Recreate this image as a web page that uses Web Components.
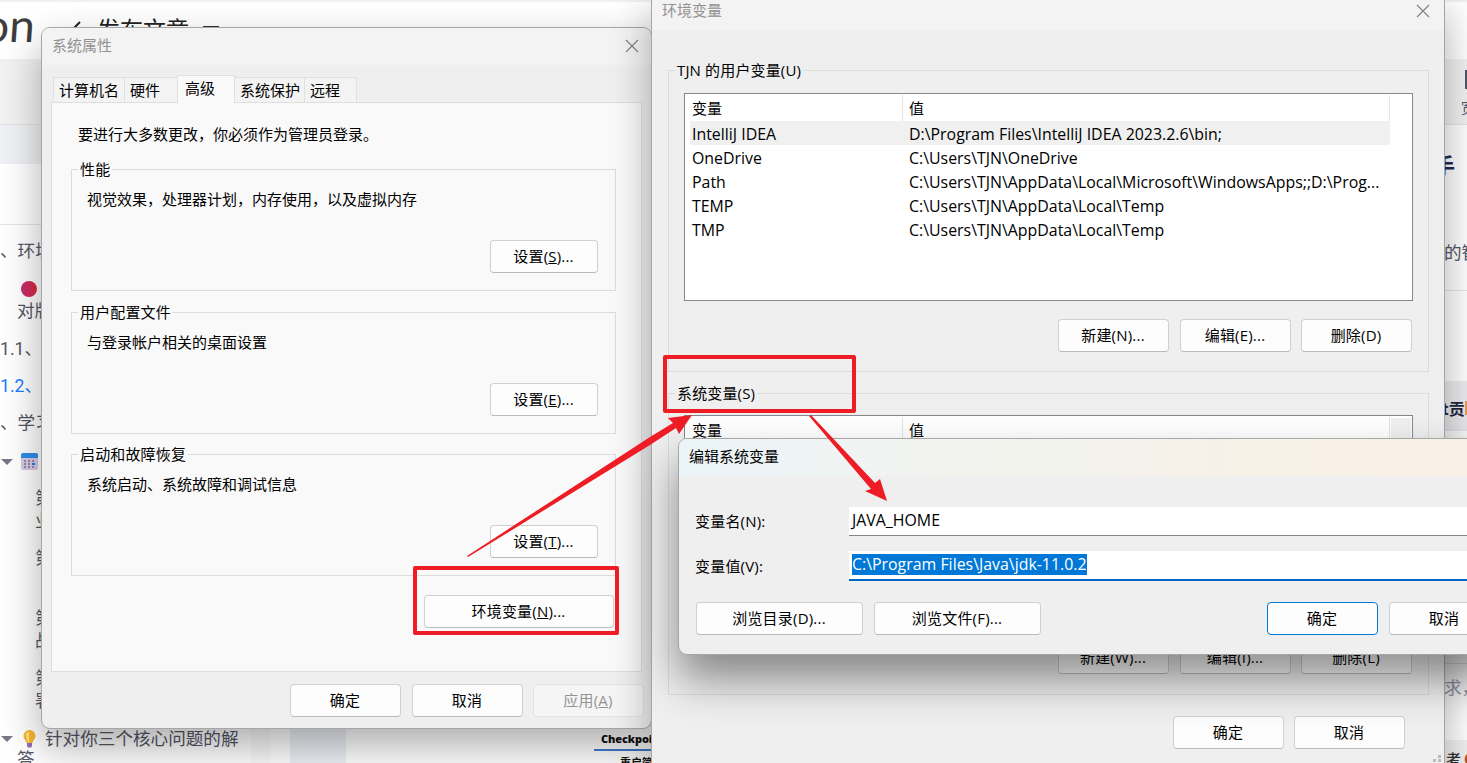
<!DOCTYPE html>
<html lang="zh-CN">
<head>
<meta charset="utf-8">
<title>环境变量</title>
<style>
    html, body {
        margin: 0;
        height: 100%;
        overflow: hidden;
        background: #fff;
    }

    body {
        font: 15px/20px "Open Sans", "Noto Sans CJK SC", sans-serif;
        color: #000;
    }
</style>
</head>
<body>
<desk-top>
    <article-page></article-page>

    <dialog-window class="props" heading="系统属性" inactive closable>
        <tab-strip>
            <tab-item style="width:70px">计算机名</tab-item>
            <tab-item style="width:52px">硬件</tab-item>
            <tab-item style="width:56px" selected>高级</tab-item>
            <tab-item style="width:69px">系统保护</tab-item>
            <tab-item style="width:51px">远程</tab-item>
        </tab-strip>
        <tab-panel>
            <span slot="intro">要进行大多数更改，你必须作为管理员登录。</span>
            <group-box heading="性能">
                <setting-block>视觉效果，处理器计划，内存使用，以及虚拟内存<push-button slot="action" style="width:108px">设置(<u>S</u>)...</push-button></setting-block>
            </group-box>
            <group-box heading="用户配置文件">
                <setting-block>与登录帐户相关的桌面设置<push-button slot="action" style="width:108px">设置(<u>E</u>)...</push-button></setting-block>
            </group-box>
            <group-box heading="启动和故障恢复" style="margin-top:-1px">
                <setting-block>系统启动、系统故障和调试信息<push-button slot="action" style="width:108px">设置(<u>T</u>)...</push-button></setting-block>
            </group-box>
            <push-button slot="extra" style="width:190px">环境变量(<u>N</u>)...</push-button>
        </tab-panel>
        <button-row style="padding:12px 7px 0 0">
            <push-button>确定</push-button>
            <push-button>取消</push-button>
            <push-button disabled style="margin-left:-1px">应用(<u>A</u>)</push-button>
        </button-row>
    </dialog-window>

    <dialog-window class="env" heading="环境变量" inactive closable>
        <group-box heading="TJN 的用户变量(U)" style="height:311px;margin:31px 15px 12px 16px">
            <var-table style="margin:13px 15px 0">
                <var-row name="IntelliJ IDEA" value="D:\Program Files\IntelliJ IDEA 2023.2.6\bin;" selected></var-row>
                <var-row name="OneDrive" value="C:\Users\TJN\OneDrive"></var-row>
                <var-row name="Path" value="C:\Users\TJN\AppData\Local\Microsoft\WindowsApps;;D:\Prog..."></var-row>
                <var-row name="TEMP" value="C:\Users\TJN\AppData\Local\Temp"></var-row>
                <var-row name="TMP" value="C:\Users\TJN\AppData\Local\Temp"></var-row>
            </var-table>
            <button-row style="padding:18px 16px 0 0">
                <push-button>新建(N)...</push-button>
                <push-button>编辑(E)...</push-button>
                <push-button style="margin-left:-1px">删除(D)</push-button>
            </button-row>
        </group-box>
        <group-box heading="系统变量(S)" style="height:311px;margin:0 15px 0 16px">
            <var-table scroll style="margin:12px 15px 0"></var-table>
            <button-row style="padding:18px 16px 0 0">
                <push-button>新建(W)...</push-button>
                <push-button>编辑(I)...</push-button>
                <push-button style="margin-left:-1px">删除(L)</push-button>
            </button-row>
        </group-box>
        <button-row style="padding:21px 39px 0 0">
            <push-button>确定</push-button>
            <push-button style="margin-left:-1px">取消</push-button>
        </button-row>
        <size-grip></size-grip>
    </dialog-window>

    <dialog-window class="edit" heading="编辑系统变量">
        <edit-field label="变量名(N):" style="margin-top:31px">JAVA_HOME</edit-field>
        <edit-field label="变量值(V):" style="margin-top:15px" focused>C:\Program Files\Java\jdk-11.0.2</edit-field>
        <button-row style="padding:21px 16px 0 17px">
            <push-button style="width:167px">浏览目录(D)...</push-button>
            <push-button style="width:167px;margin-right:auto">浏览文件(F)...</push-button>
            <push-button primary>确定</push-button>
            <push-button>取消</push-button>
        </button-row>
    </dialog-window>

    <red-marks></red-marks>
</desk-top>

<script>
// Each element only needs its own markup, the base class does the cloning
class BaseElement extends HTMLElement {
    connectedCallback() {
        if (this.shadowRoot) return;
        const template = document.createElement("template");
        template.innerHTML = this.render();
        this.attachShadow({ mode: "open" }).appendChild(template.content.cloneNode(true));
    }
    attr(name) {
        return this.getAttribute(name) || "";
    }
}

class DeskTop extends BaseElement {
    render() {
        return `
            <style>
            :host {
                display: block;
                position: relative;
                width: 1467px;
                height: 763px;
                overflow: hidden;
            }
            ::slotted(dialog-window) { position: absolute; }
            ::slotted(.props) { left: 41px; top: 27px; width: 609px; height: 700px; }
            ::slotted(.env) { left: 651px; top: -8px; width: 792px; height: 800px; }
            ::slotted(.edit) { left: 678px; top: 438px; width: 837px; height: 215px; }
            ::slotted(red-marks) { position: absolute; left: 0; top: 0; }
            </style>
            <slot></slot>`;
    }
}

class ArticlePage extends BaseElement {
    render() {
        return `
            <style>
            :host {
                display: grid;
                grid-template-rows: 59px 66px 39px 599px;
                height: 763px;
                color: #555666;
                font: 17.6px/22px Roboto, "Noto Sans CJK SC", sans-serif;
                font-weight: 400;
                white-space: nowrap;
            }
            header {
                display: flex;
                box-sizing: border-box;
                border-top: 2px solid #f0f0f0;
                color: #222;
            }
            .logo {
                width: 74px;
                margin-left: -17px;
                font: 46px/46px Lato, sans-serif;
                color: #3d3d3d;
                transform: skewX(-4deg);
            }
            .back { margin: 19px 16px 0 14px; }
            .title { font-size: 23px; line-height: 58px; font-weight: 400; }
            .dash { width: 16px; height: 2px; margin: 24px 0 0 14px; background: #333; }
            .tools {
                display: flex;
                justify-content: flex-end;
                background: #f2f2f3;
                border-bottom: 1px solid #e2e3e5;
                box-sizing: border-box;
                overflow: hidden;
            }
            .tool { width: 6px; font-size: 14px; line-height: 20px; }
            .tool i { display: block; width: 2px; height: 19px; margin: 11px 0 9px 4px; background: #555666; }
            .crumbs { background: linear-gradient(90deg, #eff1f4 0 1440px, #fff 1440px); }
            main { display: flex; }
            nav { width: 270px; border-top: 1px solid #e6e6e6; margin-top: 60px; background: linear-gradient(90deg, #fff 0 251px, #fafafa 251px); }
            nav div { display: flex; align-items: center; height: 22px; }
            nav svg { flex: none; }
            .blue { color: #1a7cff; }
            .body { width: 1174px; display: flex; align-items: flex-end; }
            .block { width: 56px; height: 60px; margin: 0 248px 0 20px; background: #edf0f5; }
            .sheet { width: 80px; height: 34px; color: #111; font: bold 11px/20px "Open Sans", "Noto Sans CJK SC", sans-serif; letter-spacing: -.1px; }
            .sheet b { display: block; padding-left: 7px; border-bottom: 2px solid #3f7bd0; height: 20px; }
            .sheet p { margin: 2px 0 0 26px; }
            aside { width: 23px; }
            aside div { box-sizing: border-box; }
            aside .clip { overflow: hidden; }
            </style>
            <header>
                <span class="logo">on</span>
                <svg class="back" width="10" height="16" viewBox="0 0 10 16" fill="none" stroke="#222" stroke-width="2"><path d="M9 1 2 8l7 7"/></svg>
                <span class="title">发布文章</span>
                <span class="dash"></span>
            </header>
            <div class="tools"><div class="tool"><i></i>宽</div></div>
            <div class="crumbs"></div>
            <main>
                <nav>
                    <div style="margin-top:15px">、<span>环境</span></div>
                    <div style="margin:16px 0 0 21px">
                        <svg width="16" height="16" viewBox="0 0 16 16"><defs><linearGradient id="r"><stop stop-color="#bd2f78"/><stop offset="1" stop-color="#e02b3e"/></linearGradient></defs><circle fill="url(#r)" cx="8" cy="8" r="8"/></svg>
                    </div>
                    <div style="margin-left:17px">对版</div>
                    <div style="margin-top:16px">1.1、</div>
                    <div style="margin-top:15px" class="blue">1.2、</div>
                    <div style="margin-top:15px">、<span>学习</span></div>
                    <div style="margin-top:17px">
                        <svg width="14" height="8" viewBox="0 0 14 8"><path fill="#777888" d="M1 1h12L7 7z"/></svg>
                        <svg style="margin-left:7px" width="17" height="18" viewBox="0 0 17 18">
                            <rect width="17" height="17" rx="2" fill="#d7cbe5"/><path fill="#2d8fe8" d="M2 0h13a2 2 0 0 1 2 2v3H0V2a2 2 0 0 1 2-2z"/>
                            <path fill="#9389ac" d="M3 7h2v2H3zM7 7h2v2H7zM11 7h2v2h-2zM3 10h2v2H3zM7 10h2v2H7zM3 13h2v2H3zM7 13h2v2H7zM11 13h2v2h-2z"/><path fill="#247be0" d="M11 10h3v2h-3z"/>
                        </svg>
                    </div>
                    <div style="margin:14px 0 0 35px">第</div>
                    <div style="margin:1px 0 0 35px">业</div>
                    <div style="margin:15px 0 0 35px">第</div>
                    <div style="margin:38px 0 0 35px">第</div>
                    <div style="margin:1px 0 0 35px">战</div>
                    <div style="margin:15px 0 0 35px">第</div>
                    <div style="margin:1px 0 0 35px">署</div>
                    <div style="margin-top:16px">
                        <svg width="14" height="8" viewBox="0 0 14 8"><path fill="#777888" d="M1 1h12L7 7z"/></svg>
                        <svg style="margin:0 9px 0 9px" width="13" height="18" viewBox="0 0 13 18">
                            <path fill="#f8b52c" d="M6.500 0a6 6 0 0 1 6 6c0 3-2.500 4-3 7h-6c-.5-3-3-4-3-7a6 6 0 0 1 6-6z"/>
                            <path fill="#ffe28a" d="M3 5a3 3 0 0 1 3-3v11H5z"/><path fill="#936db4" d="M4 13h5v3l-1 1.500H5L4 16z"/>
                        </svg>针对你三个核心问题的解
                    </div>
                    <div style="margin:-2px 0 0 17px">答</div>
                </nav>
                <div class="body">
                    <div class="block"></div>
                    <div class="sheet"><b>Checkpoi</b><p>重启简</p></div>
                </div>
                <aside>
                    <div style="height:127px;margin-top:-17px;font:bold 22px/34px 'Noto Sans CJK SC',sans-serif;color:#222b52;text-indent:-11px">手<span style="display:block;margin-top:53px;font:17.6px/36px 'Noto Sans CJK SC',sans-serif;color:#555666;text-indent:0">的智</span></div>
                    <div style="height:107px;border-top:1px solid #e6e6e6;margin-top:16px;border-bottom:1px solid #e6e6e6"></div>
                    <div class="clip" style="height:49px;margin-top:-16px;padding-top:15px;background:#ececef;font:bold 16px/24px 'Noto Sans CJK SC',sans-serif;color:#22263f;display:flex"><span style="margin-left:-2px">t贡</span><i style="width:9px;height:14px;margin-top:5px;background:#f39a52;flex:none"></i></div>
                    <div style="height:234px;border-top:1px solid #dfe3f2;border-bottom:1px solid #e4e4e4"></div>
                    <div style="height:76px;line-height:48px;color:#999aaa">求，</div>
                    <div class="clip" style="height:30px;background:#f2f2f3;line-height:40px;font-size:15px;font-weight:500;color:#333;padding-left:2px">考<span style="margin-left:3px;color:#c4522f">●</span></div>
                </aside>
            </main>`;
    }
}

class DialogWindow extends BaseElement {
    render() {
        const close = this.hasAttribute("closable")
            ? `<svg width="14" height="14" viewBox="0 0 14 14" stroke="#838383" stroke-width="1.2"><path d="m1 1 12 12M13 1 1 13"/></svg>` : "";
        return `
            <style>
            :host {
                display: flex;
                flex-direction: column;
                border: 1px solid #a6a6a6;
                border-radius: 9px;
                background: #efefef;
                box-shadow: 0 24px 44px rgba(0, 0, 0, .44);
            }
            :host([inactive]) { box-shadow: 0 18px 40px rgba(0, 0, 0, .32); }
            header {
                display: flex;
                flex: none;
                align-items: center;
                justify-content: space-between;
                box-sizing: border-box;
                height: 37px;
                padding: 0 12px 2px 10px;
                border-radius: 8px 8px 0 0;
                background: linear-gradient(90deg, #ebf4f8, #f2f3ef 32%, #f3f2ec 50%, #f7f1e7 68%, #faf0e5);
            }
            header span { margin-top: -2px; }
            :host([inactive]) header { background: #f3f3f3; color: #929292; }
            :host(.env) header { padding-right: 14px; }
            </style>
            <header><span>${this.attr("heading")}</span>${close}</header>
            <slot></slot>`;
    }
}

class TabStrip extends BaseElement {
    render() {
        return `
            <style>
            :host {
                display: flex;
                align-items: flex-end;
                height: 27px;
                margin: 10px 0 0 11px;
            }
            </style>
            <slot></slot>`;
    }
}

class TabItem extends BaseElement {
    render() {
        return `
            <style>
            :host {
                box-sizing: content-box;
                height: 24px;
                border: 1px solid #e0e0e0;
                border-bottom: 0;
                margin-right: -1px;
                background: #f3f3f3;
                line-height: 25px;
                text-indent: 5px;
                white-space: nowrap;
            }
            :host([selected]) {
                position: relative;
                height: 27px;
                margin-bottom: -1px;
                background: #f9f9f9;
                line-height: 25px;
                text-indent: 7px;
            }
            </style>
            <slot></slot>`;
    }
}

class TabPanel extends BaseElement {
    render() {
        return `
            <style>
            :host {
                display: flex;
                flex-direction: column;
                box-sizing: border-box;
                flex: none;
                width: 591px;
                height: 570px;
                margin-left: 9px;
                padding: 21px 25px 0 19px;
                border: 1px solid #dfdfdf;
                background: #f9f9f9;
            }
            .intro { padding: 0 0 16px 7px; }
            .groups { display: grid; gap: 12px; }
            .extra { display: flex; justify-content: flex-end; margin: 19px 2px 0 0; }
            ::slotted(group-box) { height: 131px; }
            </style>
            <div class="intro"><slot name="intro"></slot></div>
            <div class="groups"><slot></slot></div>
            <div class="extra"><slot name="extra"></slot></div>`;
    }
}

class GroupBox extends BaseElement {
    render() {
        return `
            <style>
            :host { display: block; flex: none; }
            fieldset {
                box-sizing: border-box;
                height: 100%;
                margin: 0;
                padding: 0;
                border: 1px solid #dcdcdc;
            }
            legend {
                height: 19px;
                margin-left: 6px;
                padding: 0 2px;
                line-height: 18px;
                letter-spacing: .15px;
            }
            </style>
            <fieldset><legend>${this.attr("heading")}</legend><slot></slot></fieldset>`;
    }
}

class SettingBlock extends BaseElement {
    render() {
        return `
            <style>
            :host { display: block; padding: 10px 17px 0 15px; }
            .action { display: flex; justify-content: flex-end; margin-top: 31px; }
            </style>
            <slot></slot>
            <div class="action"><slot name="action"></slot></div>`;
    }
}

class ButtonRow extends BaseElement {
    render() {
        return `
            <style>
            :host { display: flex; justify-content: flex-end; gap: 11px; }
            </style>
            <slot></slot>`;
    }
}

class PushButton extends BaseElement {
    render() {
        return `
            <style>
            :host {
                display: block;
                box-sizing: border-box;
                flex: none;
                width: 111px;
                height: 33px;
                padding-right: 1px;
                border: 1px solid #d0d0d0;
                border-bottom-color: #bababa;
                border-radius: 4px;
                background: #fdfdfd;
                line-height: 30px;
                letter-spacing: .2px;
                text-align: center;
                white-space: nowrap;
            }
            :host([primary]) { border-color: #0078d4; }
            :host([disabled]) { border-color: #e3e3e3; background: #f5f5f5; color: #949494; }
            </style>
            <slot></slot>`;
    }
}

class VarTable extends BaseElement {
    render() {
        return `
            <style>
            :host {
                display: block;
                box-sizing: border-box;
                height: 208px;
                padding: 1px 5px 0;
                border: 1px solid #828790;
                background: #fff;
            }
            .head {
                display: grid;
                grid-template-columns: 213px 487px 1fr;
                height: 26px;
                line-height: 26px;
            }
            .head span { border-right: 1px solid #e3e3e3; padding-left: 2px; }
            .head span + span { padding-left: 6px; }
            .bar { display: none; margin: 1px -4px 0 1px; background: #f0f0f0; }
            :host([scroll]) .bar { display: block; }
            </style>
            <div class="head"><span>变量</span><span>值</span><i class="bar"></i></div>
            <slot></slot>`;
    }
}

class VarRow extends BaseElement {
    render() {
        return `
            <style>
            :host {
                display: grid;
                grid-template-columns: 217px 1fr;
                width: 698px;
                height: 24px;
                padding-left: 2px;
                font-size: 15.9px;
                line-height: 26px;
                white-space: nowrap;
            }
            :host([selected]) { background: #f0f0f0; }
            </style>
            <span>${this.attr("name")}</span><span>${this.attr("value")}</span>`;
    }
}

class EditField extends BaseElement {
    render() {
        return `
            <style>
            :host {
                display: grid;
                grid-template-columns: 154px 1fr;
                flex: none;
                height: 29px;
                padding: 0 16px 0 16px;
            }
            label { line-height: 28px; letter-spacing: .2px; }
            .box {
                box-sizing: border-box;
                padding: 3px 3px 0;
                border-bottom: 1px solid #868686;
                background: #fff;
                font-size: 15.9px;
                line-height: 21px;
            }
            :host([focused]) { height: 30px; }
            :host([focused]) label { line-height: 30px; }
            :host([focused]) .box { border-bottom: 2px solid #0067c0; }
            :host([focused]) .text { display: inline-block; background: #0078d7; color: #fff; }
            </style>
            <label>${this.attr("label")}</label>
            <div class="box"><span class="text"><slot></slot></span></div>`;
    }
}

class SizeGrip extends BaseElement {
    render() {
        return `
            <style>
            :host { display: flex; justify-content: flex-end; padding: 6px 3px 0; }
            </style>
            <svg width="8" height="8" viewBox="0 0 8 8" fill="#bdbdbd"><path d="M5 0h3v3H5zM0 4h3v3H0zM5 4h3v3H5z"/></svg>`;
    }
}

class RedMarks extends BaseElement {
    render() {
        return `
            <style>
            :host { display: block; }
            svg { display: block; }
            </style>
            <svg width="1467" height="763" viewBox="0 0 1467 763" fill="#ee1c24">
                <g fill="none" stroke="#ee1c24" stroke-width="4" stroke-linejoin="round">
                    <rect x="415" y="568" width="202" height="65"/>
                    <rect x="665" y="357" width="189" height="54"/>
                </g>
                <path d="M467 556 650 437 673 423 668 418 692 415 679 434 676 428 650 445 468 557z"/>
                <path d="M809 416 811 415 875 483 880 479 887 501 865 491 871 489z"/>
            </svg>`;
    }
}

const elements = {
    "desk-top": DeskTop,
    "article-page": ArticlePage,
    "dialog-window": DialogWindow,
    "tab-strip": TabStrip,
    "tab-item": TabItem,
    "tab-panel": TabPanel,
    "group-box": GroupBox,
    "setting-block": SettingBlock,
    "button-row": ButtonRow,
    "push-button": PushButton,
    "var-table": VarTable,
    "var-row": VarRow,
    "edit-field": EditField,
    "size-grip": SizeGrip,
    "red-marks": RedMarks
};

for (const name in elements) {
    if (!customElements.get(name)) {
        customElements.define(name, elements[name]);
    }
}
</script>
</body>
</html>
